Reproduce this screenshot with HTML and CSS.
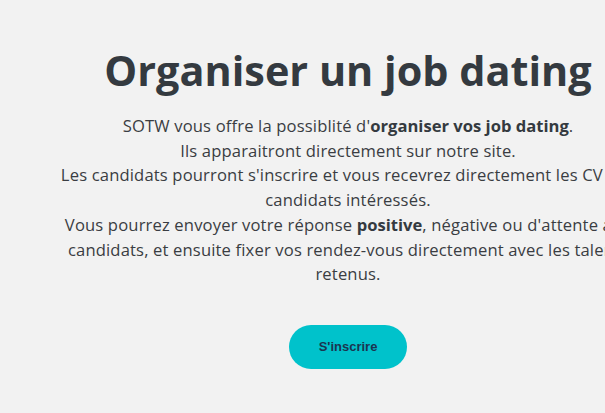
FILE: index.html
```
<!DOCTYPE html>
<html lang="fr">
<head>
<meta charset="utf-8">
<title>Organiser un job dating</title>
<link rel="stylesheet" href="styles.css">
</head>
<body>
<main class="section">
  <div class="container">
    <h1 class="title">Organiser un job dating</h1>
    <p class="lead">SOTW vous offre la possiblité d'<strong>organiser vos job dating</strong>.<br>
    Ils apparaitront directement sur notre site.<br>
    Les candidats pourront s'inscrire et vous recevrez directement les CV des<br>
    candidats intéressés.<br>
    Vous pourrez envoyer votre réponse <strong>positive</strong>, négative ou d'attente aux<br>
    candidats, et ensuite fixer vos rendez-vous directement avec les talents<br>
    retenus.</p>
    <div class="actions">
      <a class="btn" href="#">S'inscrire</a>
    </div>
  </div>
</main>
</body>
</html>
```
FILE: styles.css
```
html, body {
  margin: 0;
  padding: 0;
  background: #f2f2f2;
  overflow: hidden;
}
body {
  font-family: "Open Sans", "DejaVu Sans", sans-serif;
  color: #3a3d42;
}
.section {
  padding-top: 40px;
}
.container {
  width: 700px;
  margin-left: -2px;
  text-align: center;
}
.title {
  margin: 0;
  font-size: 41.4px;
  line-height: 60px;
  font-weight: 700;
  color: #343a40;
  letter-spacing: 0;
}
.lead {
  margin: 14px 0 0;
  font-size: 16.6px;
  line-height: 24.7px;
  letter-spacing: 0.15px;
  font-weight: 400;
  color: #3a3d42;
}
.lead strong {
  font-weight: 700;
  letter-spacing: 0;
  color: #343a40;
}
.actions {
  margin-top: 38px;
  display: flex;
  justify-content: center;
}
.btn {
  display: inline-flex;
  align-items: center;
  justify-content: center;
  width: 118px;
  height: 44px;
  border-radius: 22px;
  background: #00c2cb;
  color: #1b3550;
  font-family: "Liberation Sans", Arial, sans-serif;
  font-weight: 700;
  font-size: 13px;
  text-decoration: none;
}
```
